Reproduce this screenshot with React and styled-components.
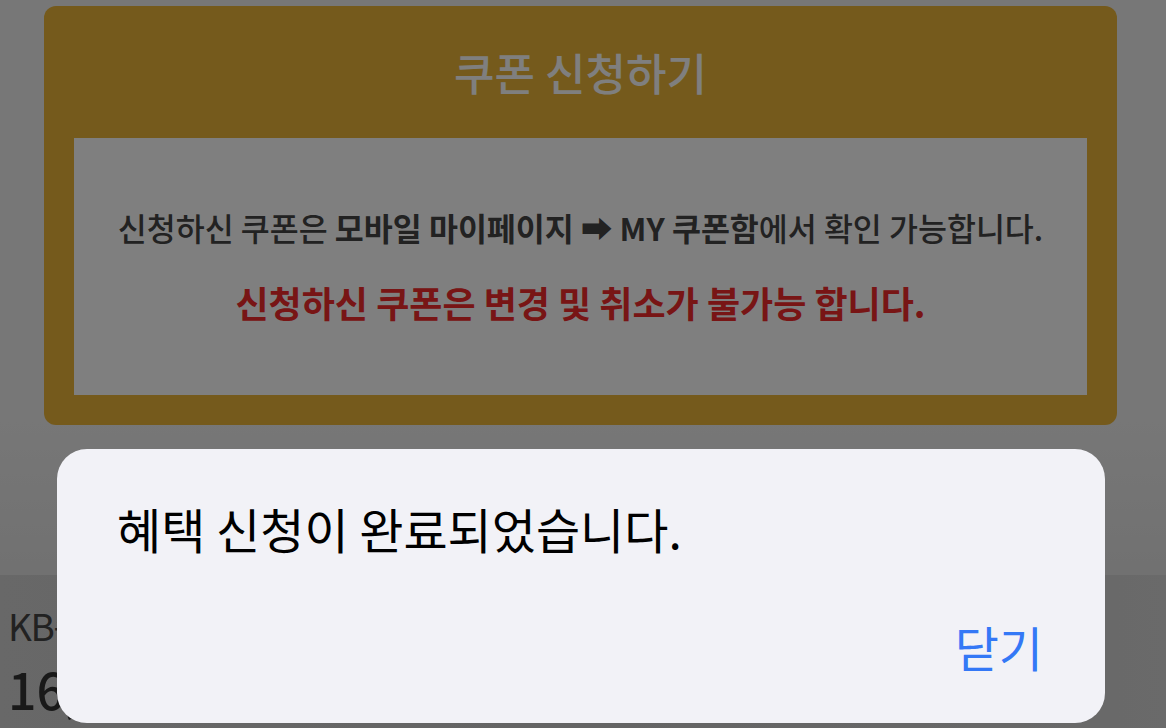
import styled, { createGlobalStyle } from "styled-components";

const GlobalStyle = createGlobalStyle`
  html, body {
    margin: 0;
    padding: 0;
    background: #eeeeee;
    font-family: "Noto Sans CJK KR", "Noto Sans", sans-serif;
  }
`;

const Page = styled.div`
  height: 728px;
  overflow: hidden;
  display: flex;
  flex-direction: column;
  background: linear-gradient(to bottom, #eeeeee 0%, #eeeeee 58%, #e2e2e2 79%);
`;

const CouponCard = styled.section`
  margin: 6px 49px 0 44px;
  padding: 0 30px 30px;
  background: #eab438;
  border-radius: 12px;
`;

const CardTitle = styled.h2`
  margin: 0;
  height: 132px;
  display: flex;
  align-items: center;
  justify-content: center;
  font-size: 44px;
  font-weight: 500;
  color: #ffffff;
`;

const Notice = styled.div`
  height: 257px;
  background: #ffffff;
  display: flex;
  flex-direction: column;
  align-items: center;
  justify-content: center;
  gap: 34px;
`;

const NoticeLine = styled.p`
  margin: 0;
  font-size: ${(p) => (p.$warn ? "36px" : "31.5px")};
  font-weight: ${(p) => (p.$warn ? 700 : 500)};
  color: ${(p) => (p.$warn ? "#f02a2a" : "#444444")};
  line-height: 1.2;
  b {
    font-weight: 700;
  }
`;

const BottomBar = styled.div`
  margin-top: 150px;
  flex: 1;
  background: linear-gradient(to right, #d0d0d0, #c8c8c8 50%, #d4d4d4);
  padding: 32px 8px 0;
  color: #444444;
`;

const CardName = styled.div`
  font-size: 37px;
  line-height: 1;
  letter-spacing: -1.5px;
`;

const Amount = styled.div`
  margin-top: 19px;
  font-size: 50px;
  font-weight: 500;
  line-height: 1;
  color: #333333;
`;

const Dim = styled.div`
  position: fixed;
  inset: 0;
  background: rgba(0, 0, 0, 0.5);
  display: flex;
  align-items: flex-end;
  padding: 0 61px 5px 57px;
`;

const AlertBox = styled.div`
  width: 100%;
  height: 274px;
  box-sizing: border-box;
  background: #f2f2f7;
  border-radius: 30px;
  padding: 55px 62px 0 60px;
  display: flex;
  flex-direction: column;
`;

const AlertMessage = styled.p`
  margin: 0;
  font-size: 48px;
  line-height: 1;
  color: #000000;
`;

const AlertActions = styled.div`
  margin-top: 70px;
  display: flex;
  justify-content: flex-end;
`;

const AlertButton = styled.button`
  border: 0;
  background: none;
  padding: 0;
  font-family: inherit;
  font-size: 48px;
  line-height: 1;
  color: #3478f6;
  cursor: pointer;
`;

export default function App() {
  return (
    <>
      <GlobalStyle />
      <Page>
        <CouponCard>
          <CardTitle>쿠폰 신청하기</CardTitle>
          <Notice>
            <NoticeLine>
              신청하신 쿠폰은 <b>모바일 마이페이지 ➡ MY 쿠폰함</b>에서 확인 가능합니다.
            </NoticeLine>
            <NoticeLine $warn>신청하신 쿠폰은 변경 및 취소가 불가능 합니다.</NoticeLine>
          </Notice>
        </CouponCard>
        <BottomBar>
          <CardName>KB손해보험</CardName>
          <Amount>16,000원</Amount>
        </BottomBar>
      </Page>
      <Dim>
        <AlertBox>
          <AlertMessage>혜택 신청이 완료되었습니다.</AlertMessage>
          <AlertActions>
            <AlertButton>닫기</AlertButton>
          </AlertActions>
        </AlertBox>
      </Dim>
    </>
  );
}
